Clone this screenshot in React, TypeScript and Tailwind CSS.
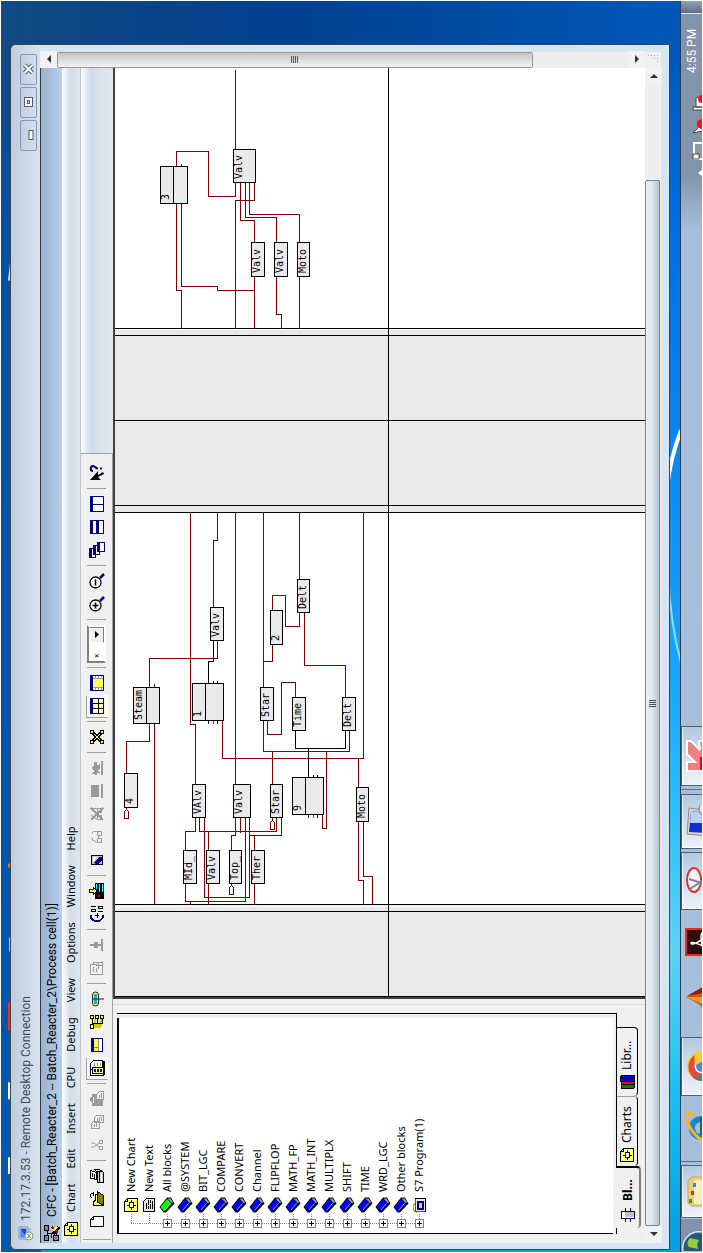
import type { ReactNode } from "react";

const NAVY = "#000080";
const GRAY = "#9a9a9a";
const WIRE = "#800000";

function Pix({ children, size = 16 }: { children: ReactNode; size?: number }) {
  return (
    <svg
      width={size}
      height={size}
      viewBox="0 0 16 16"
      fill="none"
      shapeRendering="crispEdges"
      className="shrink-0"
      aria-hidden="true"
    >
      {children}
    </svg>
  );
}

/* ---------- shared small icons ---------- */

const ChartIcon = () => (
  <Pix>
    <rect x="1" y="2" width="14" height="12" fill="#ffff66" />
    <path d="M1 3.500h14M1 5.500h14M1 7.500h14M1 9.500h14M1 11.500h14" stroke="#fff" strokeDasharray="1 1" />
    <path d="M1.500 1.500h10l3 3v10h-13z" stroke="#000" />
    <path d="M11.500 1.500v3h3" stroke="#000" fill="#fff" />
    <path d="M8 4v2M8 10v3M3 8.500h3M10 8.500h3" stroke={NAVY} />
    <rect x="5.500" y="6.500" width="5" height="4" stroke={NAVY} fill="#fff" />
  </Pix>
);

const TextIcon = () => (
  <Pix>
    <path d="M1.500 2.500h10l3 3v8h-13z" stroke="#000" fill="#e8e8e8" />
    <path d="M4 5.500h6M4 7.500h3M8 7.500h5M4 9.500h5M10 9.500h3M4 11.500h8" stroke="#000" />
  </Pix>
);

const BookIcon = ({ fill }: { fill: string }) => (
  <svg width="16" height="16" viewBox="0 0 16 16" className="shrink-0" aria-hidden="true">
    <path d="M6 0.500 15.500 8v4L9.500 15.500 0.500 7V4.500z" fill="#000" />
    <path d="M6 1.500 14 8 9 12.500 1.500 5z" fill={fill} />
    <path d="M3 6 9.500 11.500" stroke="#ccc" strokeWidth="0.800" />
    <path d="M10 12.500l4.500-4v3L10 14.500z" fill="#999" />
  </svg>
);

const ProgramIcon = () => (
  <Pix>
    <path d="M1 5 3 2h5l2 3H1z" fill="#ffff66" stroke={GRAY} />
    <rect x="1.500" y="4.500" width="13" height="10" fill="#e8e8e8" stroke="#555" />
    <path d="M14.500 4v11M1 14.500h14" stroke="#000" />
    <rect x="4.500" y="6.500" width="7" height="5" fill="#ccc" stroke={NAVY} strokeWidth="2" />
  </Pix>
);

const BlockIcon = () => (
  <Pix>
    <rect x="4.500" y="1.500" width="7" height="13" fill="#fff" stroke={NAVY} />
    <rect x="6" y="5" width="5" height="9" fill="#c0c0c0" />
    <path d="M1 5.500h3M1 10.500h3M12 5.500h3M12 10.500h3" stroke={NAVY} />
  </Pix>
);

const LibraryIcon = () => (
  <Pix>
    <path d="M1 2h4l1 13H2z" fill="#008000" stroke="#000" />
    <path d="M5 2h3l1 13H6z" fill="#ff0000" stroke="#000" />
    <path d="M8 1h5l2 3v11H9z" fill="#0000ff" stroke="#000" />
    <path d="M11.500 2v12" stroke="#000080" />
  </Pix>
);

const RemoteIcon = () => (
  <svg width="16" height="16" viewBox="0 0 16 16" className="shrink-0" aria-hidden="true">
    <rect x="2" y="1" width="12" height="9" rx="1" fill="#e9eef5" stroke="#7b8ca5" />
    <path d="M3.500 2.500h9v6h-9z" fill="#2448d8" />
    <path d="M3.500 2.500h9L4 8z" fill="#5f86ff" />
    <path d="M7 13h6v-2H8z" fill="#b8c4d4" />
    <circle cx="5" cy="11" r="4" fill="#eef4ee" stroke="#8aa08a" />
    <path d="M3 9.500 5 11 3 12.500M7 9.500 5.500 11 7 12.500" stroke="#1e9a2e" fill="none" />
  </svg>
);

const CfcIcon = () => (
  <Pix>
    <path d="M3 3h10M3 12h8M8 3v9M3 7h5" stroke="#000" />
    <rect x="0.500" y="0.500" width="5" height="4" fill="#888" stroke="#000" />
    <rect x="10.500" y="0.500" width="5" height="4" fill="#888" stroke="#000" />
    <rect x="0.500" y="9.500" width="5" height="5" fill="#888" stroke="#000" />
    <path d="M7 9 14 15M9 13l4-3" stroke="#000" strokeWidth="3" />
    <path d="M14 8 8 14" stroke="#c00000" strokeWidth="2" />
    <path d="M10 9 14 13" stroke="#ffff33" strokeWidth="2" />
  </Pix>
);

/* ---------- toolbar ---------- */

type Tool = { name: string; art: ReactNode; pressed?: boolean };

const zoomLens = (plus: boolean) => (
  <g shapeRendering="auto">
    <circle cx="6.500" cy="6.500" r="5.500" stroke="#000" strokeWidth="1.300" fill="#fff" />
    <path d="M3.500 6.500h6" stroke="#000" strokeWidth="1.600" />
    {plus && <path d="M6.500 3.500v6" stroke="#000" strokeWidth="1.600" />}
    <path d="m11 11 4 4" stroke={NAVY} strokeWidth="2.500" />
  </g>
);

const glasses = (
  <path
    d="M2.500 8.500h4v4h-4zM9.500 8.500h4v4h-4zM7 9.500h2M2.500 8l3-5h2M13.500 8V4l-2-1"
    stroke={GRAY}
    shapeRendering="auto"
  />
);

const groups: Tool[][] = [
  [
    { name: "New", art: <path d="M3.500 1.500h7l3 3v10h-10zM10.500 1.500v3h3" stroke="#000" fill="#fff" /> },
    {
      name: "Open",
      art: (
        <>
          <path d="M1.500 14V4.500h4l1 2h6V9" fill="#ffff66" stroke="#000" />
          <path d="M1.500 14.500 5 8.500h10.500l-4 6z" fill="#808000" stroke="#000" />
          <path d="M9 2.500h1M10 1.500h3M13.500 2v2M11 4.500h4" stroke="#000" />
        </>
      ),
    },
    {
      name: "Print",
      art: (
        <>
          <path d="M4.500 7.500 6 1.500h7.500l-2 6z" fill="#fff" stroke="#000" />
          <path d="M7 3.500h4M6 5.500h4" stroke="#000" />
          <path d="M1.500 8.500h10l3-3v5l-3 4h-10z" fill="#d0d0d0" stroke="#000" />
          <path d="M1 10.500h11M12.500 8v5" stroke="#000" />
          <path d="M3 12.500h7" stroke="#fff" />
        </>
      ),
    },
  ],
  [
    {
      name: "Cut",
      art: (
        <path
          d="M6 2v3l4 5M10 2v3L6 10M3.500 10.500h3v3h-3zM9.500 10.500h3v3h-3z"
          stroke={GRAY}
          shapeRendering="auto"
        />
      ),
    },
    {
      name: "Copy",
      art: (
        <path
          d="M1.500 2.500h5l2 2v6h-7zM7.500 5.500h5l2 2v7h-7zM3 5.500h3M3 7.500h4M9 8.500h3M9 10.500h4M9 12.500h4"
          stroke={GRAY}
          fill="#f0f0f0"
        />
      ),
    },
    {
      name: "Paste",
      art: (
        <>
          <path d="M1 3h3l2-2h3l2 2h2v11H1z" fill={GRAY} />
          <path d="M4 4.500h6" stroke="#fff" />
          <path d="M7.500 7.500h5l3 3v4h-8zM9 10.500h3M9 12.500h5" fill="#f0f0f0" stroke={GRAY} />
        </>
      ),
    },
  ],
  [
    {
      name: "Catalog",
      pressed: true,
      art: (
        <>
          <path d="M6.500 1.500h6l3 3v9h-9z" fill="#fff" stroke="#000" />
          <path d="M10 5.500h3M10 8.500h3M10 11.500h3" stroke="#999" />
          <path d="M0.500 1.500h6v13h-6z" fill="#fff" stroke="#000" />
          <path d="M2.500 3.500h6v11h-6z" fill="#ffff66" stroke="#000" />
          <path d="M4 5h3v2H4zM4 8h3v2H4zM4 11h3v2H4z" fill="#0000ff" />
          <path d="M1 15h14" stroke="#000" strokeWidth="2" />
        </>
      ),
    },
    {
      name: "Sheet view",
      art: (
        <>
          <path d="M1.500 2.500h13v11h-13z" fill="#fff" stroke={NAVY} />
          <path d="M1 2h14v3H1z" fill={NAVY} />
          <path d="M2 5h12v4H2z" fill="#ffff33" />
          <path d="M2 9h4v4H2z" fill="#fff" />
          <path d="M2 9.500h12M5.500 5v4" stroke="#888" />
        </>
      ),
    },
    {
      name: "Hierarchy",
      art: (
        <>
          <path d="M3 4v8M3 6h8M4 12h8M5 2v10" stroke="#cccc00" strokeWidth="2" />
          <path
            d="M1.500 1.500h4v3h-4zM11.500 1.500h3v3h-3zM11.500 6.500h3v3h-3zM11.500 11.500h3v3h-3z"
            fill="#ffff33"
            stroke="#000"
          />
          <path d="M6 3.500h5M6.500 4v9h5M7 8.500h4" stroke="#000" />
        </>
      ),
    },
    {
      name: "Run sequence",
      art: (
        <g shapeRendering="auto">
          <rect x="1" y="3.500" width="14" height="6" rx="3" fill="#ffff33" stroke="#222" />
          <rect x="3" y="5" width="10" height="3" fill="#20b0a8" />
          <path d="M8 3.500v11.500" stroke="#222" />
        </g>
      ),
    },
  ],
  [
    {
      name: "Watch",
      art: (
        <path
          d="M1.500 1.500h10v6M1.500 1.500v12h6M4 4.500h5M4 7.500h4M10.500 7v6M7 13.500h8M7.500 9.500h6v4M12 4.500h2v5"
          stroke={GRAY}
        />
      ),
    },
    { name: "Pin", art: <path d="M7 1h2v4h2v4H9v3h5v2H2v-2h5V9H5V5h2z" fill={GRAY} /> },
  ],
  [
    {
      name: "Compile",
      art: (
        <>
          <path d="M7 2H4L1.500 5v6L4 13.500h3" stroke={NAVY} strokeWidth="2" />
          <path d="M4 8h5M7 6v4" stroke="#000" />
          <path d="M10.500 2.500h2v4h-2zM15.500 2v5M10.500 9v5M13.500 9.500h2v4h-2z" stroke="#000" />
        </>
      ),
    },
    {
      name: "Download",
      art: (
        <>
          <path d="M0 6h16v9H0z" fill="#000" />
          <path d="M7 7.500h8M7 10.500h8M7 13.500h8" stroke="#00ffff" />
          <path d="M2 9h2v2H2z" fill="#ff0000" />
          <path d="M6.500 0.500h3v4h2l-3.500 4-3.500-4h2z" fill="#ffff33" stroke={NAVY} />
        </>
      ),
    },
  ],
  [
    {
      name: "Test mode",
      art: (
        <>
          <path d="M3.500 2.500h9v11h-9z" fill="#c8c8c8" stroke="#000" />
          <path d="M4 6 10 13" stroke={NAVY} strokeWidth="4" />
          <path d="M5 4h6v4z" fill="#fff" />
        </>
      ),
    },
    { name: "Watch on", art: glasses },
    {
      name: "Watch off",
      art: (
        <>
          {glasses}
          <path d="M2 2 14 14M14 2 2 14" stroke={GRAY} strokeWidth="1.500" />
        </>
      ),
    },
    { name: "Insert watch", art: <path d="M2 2h12v8H2zM1 12h14v2H1z" fill={GRAY} /> },
    {
      name: "Remove watch",
      art: <path d="M1 12h14v2H1zM2 3l3 2 3-3 3 3h3v3h-3l1 3H8L6 9l-3 2V8H1z" fill={GRAY} />,
    },
  ],
  [
    {
      name: "Network",
      art: (
        <>
          <path d="M3 3 13 13M13 3 3 13" stroke="#000" strokeWidth="3" />
          <path d="M3 3 13 13M13 3 3 13" stroke="#ffff33" />
          <path
            d="M1.500 1.500h3v3h-3zM11.500 1.500h3v3h-3zM1.500 11.500h3v3h-3zM11.500 11.500h3v3h-3z"
            fill="#ffff33"
            stroke="#000"
          />
        </>
      ),
    },
  ],
  [
    {
      name: "Overview",
      pressed: true,
      art: (
        <>
          <path d="M0.500 1.500h15v13h-15z" fill="#ffffb0" stroke={NAVY} />
          <path d="M0 1h16v3H0z" fill={NAVY} />
          <path d="M5.500 4v11M10.500 4v11M1 9.500h14" stroke="#000" />
        </>
      ),
    },
    {
      name: "Single sheet",
      art: (
        <>
          <path d="M0.500 1.500h15v13h-15z" fill="#fff" stroke={NAVY} />
          <path d="M0 1h16v3H0z" fill={NAVY} />
          <path d="M4 5h8v9H4z" fill="#ffff66" />
          <path d="M1 6.500h3M1 9.500h3M1 12.500h3M12 6.500h3M12 9.500h3M12 12.500h3M3.500 4v10M12.500 4v10" stroke={GRAY} />
        </>
      ),
    },
  ],
];

const viewGroups: Tool[][] = [
  [
    { name: "Zoom in", art: zoomLens(true) },
    { name: "Zoom out", art: zoomLens(false) },
  ],
  [
    {
      name: "Cascade",
      art: (
        <>
          <path d="M0.500 0.500h9v6h-9z" fill="#fff" stroke={NAVY} />
          <path d="M0 0h10v3H0z" fill={NAVY} />
          <path d="M3.500 4.500h9v6h-9z" fill="#fff" stroke={NAVY} />
          <path d="M3 4h10v3H3z" fill={NAVY} />
          <path d="M6.500 8.500h9v7h-9z" fill="#fff" stroke={NAVY} />
          <path d="M6 8h10v3H6z" fill={NAVY} />
        </>
      ),
    },
    {
      name: "Tile horizontally",
      art: (
        <>
          <path d="M1.500 1.500h13v6h-13zM1.500 8.500h13v6h-13z" fill="#fff" stroke={NAVY} />
          <path d="M1 1h14v3H1zM1 8h14v2H1z" fill={NAVY} />
        </>
      ),
    },
    {
      name: "Tile vertically",
      art: (
        <>
          <path d="M0.500 1.500h15v13h-15zM8 1v14" fill="#fff" stroke={NAVY} />
          <path d="M0 1h16v3H0z" fill={NAVY} />
        </>
      ),
    },
  ],
  [
    {
      name: "Context help",
      art: (
        <g shapeRendering="auto">
          <path d="M1 1v11l3-3 3 6 2-1-3-5h4z" fill="#000" />
          <path d="M10 4c0-3 5-3 5 0 0 2-2.500 2-2.500 5M12.500 11v2" stroke={NAVY} strokeWidth="2" />
        </g>
      ),
    },
  ],
];

const Separator = () => (
  <div className="flex w-2 shrink-0 justify-center">
    <div className="h-[19px] w-px bg-[#a0a0a0]" />
  </div>
);

function ToolGroup({ tools }: { tools: Tool[] }) {
  return (
    <div className="flex shrink-0">
      {tools.map((t) => (
        <button
          key={t.name}
          type="button"
          aria-label={t.name}
          className={
            t.pressed
              ? "flex h-[22px] w-[23px] items-center justify-center border border-white border-t-[#a0a0a0] border-l-[#a0a0a0] bg-[#f8f8f8]"
              : "flex h-[22px] w-[23px] items-center justify-center"
          }
        >
          <Pix>{t.art}</Pix>
        </button>
      ))}
    </div>
  );
}

function Toolbar() {
  return (
    <div className="flex h-8 bg-linear-to-b from-white via-[#d0dceb] via-30% to-[#e2e8f0]">
      <div className="flex items-center border-r border-b border-[#a0a0a0] bg-[#f0f0f0] pr-2 pl-[3px]">
        <div className="mr-[5px] h-7 w-px bg-[#a0a0a0]" />
        {groups.map((g, i) => (
          <div key={i} className="flex items-center">
            {i > 0 && <Separator />}
            <ToolGroup tools={g} />
          </div>
        ))}
        <Separator />
        <div className="relative mx-px flex h-[19px] w-[38px] shrink-0 border-2 border-[#808080] border-r-white border-b-white bg-white">
          <select
            aria-label="Zoom level"
            className="w-full appearance-none bg-transparent pr-4 pl-[3px] text-[8px] leading-[15px] text-black"
            defaultValue="x"
          >
            <option value="x">×</option>
          </select>
          <span className="pointer-events-none absolute inset-y-0 right-0 flex w-4 items-center justify-center border border-[#808080] border-t-white border-l-white bg-[#f0f0f0]">
            <svg width="7" height="4" viewBox="0 0 7 4" aria-hidden="true">
              <path d="M0 0h7L3.500 4z" fill="#000" />
            </svg>
          </span>
        </div>
        {viewGroups.map((g, i) => (
          <div key={i} className="flex items-center">
            <Separator />
            <ToolGroup tools={g} />
          </div>
        ))}
      </div>
    </div>
  );
}

/* ---------- block catalog ---------- */

const treeItems: { label: string; kind: "chart" | "text" | "all" | "book" | "program" }[] = [
  { label: "New Chart", kind: "chart" },
  { label: "New Text", kind: "text" },
  { label: "All blocks", kind: "all" },
  { label: "@SYSTEM", kind: "book" },
  { label: "BIT_LGC", kind: "book" },
  { label: "COMPARE", kind: "book" },
  { label: "CONVERT", kind: "book" },
  { label: "Channel", kind: "book" },
  { label: "FLIPFLOP", kind: "book" },
  { label: "MATH_FP", kind: "book" },
  { label: "MATH_INT", kind: "book" },
  { label: "MULTIPLX", kind: "book" },
  { label: "SHIFT", kind: "book" },
  { label: "TIME", kind: "book" },
  { label: "WRD_LGC", kind: "book" },
  { label: "Other blocks", kind: "book" },
  { label: "S7 Program(1)", kind: "program" },
];

function TreeIcon({ kind }: { kind: string }) {
  if (kind === "chart") return <ChartIcon />;
  if (kind === "text") return <TextIcon />;
  if (kind === "program") return <ProgramIcon />;
  return <BookIcon fill={kind === "all" ? "#00ff00" : "#0000ff"} />;
}

function TreeGuide({ first, last, expandable }: { first: boolean; last: boolean; expandable: boolean }) {
  return (
    <svg width="16" height="18" viewBox="0 0 16 18" shapeRendering="crispEdges" className="shrink-0" aria-hidden="true">
      <path
        d={`M5.500 ${first ? 9 : 0}V${last ? 9 : 18}M6 9.500h10`}
        stroke="#808080"
        strokeDasharray="1 1"
        fill="none"
      />
      {expandable && (
        <>
          <rect x="1.500" y="5.500" width="8" height="8" fill="#fff" stroke="#808080" />
          <path d="M3 9.500h5M5.500 7v5" stroke="#000" />
        </>
      )}
    </svg>
  );
}

function Catalog() {
  return (
    <aside className="flex w-[239px] shrink-0 flex-col border-r border-[#d2dfec] bg-[#f0f0f0] pt-1 pr-2 pb-1 pl-[9px]">
      <div className="flex min-h-0 flex-1 border-r border-b border-black pr-1 pb-[3px]">
        <ul className="min-w-0 flex-1 overflow-hidden border-t-2 border-l border-black bg-white pt-[3px] pl-1">
          {treeItems.map((item, i) => (
            <li key={item.label} className="flex h-[18px] items-center text-[11px] leading-[18px] whitespace-nowrap">
              <TreeGuide first={i === 0} last={i === treeItems.length - 1} expandable={i > 1} />
              <TreeIcon kind={item.kind} />
              <span className="ml-[5px]">{item.label}</span>
            </li>
          ))}
        </ul>
      </div>
      <div className="flex h-6 items-start pl-[6px] text-[12px]" role="tablist">
        <button
          type="button"
          role="tab"
          aria-selected="true"
          className="-mt-px flex h-[25px] w-[62px] items-center gap-[6px] rounded-b-sm border-r-2 border-b-2 border-[#808080] border-r-black bg-[#f0f0f0] pl-[5px] font-bold"
        >
          <BlockIcon />
          Bl...
        </button>
        <button
          type="button"
          role="tab"
          aria-selected="false"
          className="flex h-[21px] w-[70px] items-center gap-1 rounded-b-sm border-r border-b border-[#a0a0a0] border-b-black pl-[3px]"
        >
          <ChartIcon />
          Charts
        </button>
        <button
          type="button"
          role="tab"
          aria-selected="false"
          className="flex h-[21px] w-[69px] items-center gap-1 rounded-b-sm border-r border-b border-black pl-[6px]"
        >
          <LibraryIcon />
          Libr...
        </button>
      </div>
    </aside>
  );
}

/* ---------- chart canvas ---------- */

type Block = { label: string; x: number; y: number; w: number; h: number; split?: boolean };

const blocks: Block[] = [
  { label: "3", x: 160, y: 166, w: 27, h: 37, split: true },
  { label: "Valv", x: 233, y: 149, w: 22, h: 33 },
  { label: "Valv", x: 251, y: 242, w: 13, h: 34 },
  { label: "Valv", x: 274, y: 242, w: 13, h: 34 },
  { label: "Moto", x: 297, y: 242, w: 12, h: 34 },
  { label: "Steam", x: 133, y: 687, w: 26, h: 36, split: true },
  { label: "Valv", x: 210, y: 607, w: 13, h: 33 },
  { label: "1", x: 192, y: 683, w: 31, h: 37, split: true },
  { label: "4", x: 124, y: 773, w: 13, h: 34 },
  { label: "2", x: 270, y: 610, w: 12, h: 34 },
  { label: "Delt", x: 297, y: 579, w: 12, h: 33 },
  { label: "Star", x: 260, y: 687, w: 13, h: 33 },
  { label: "Time", x: 292, y: 697, w: 13, h: 33 },
  { label: "Delt", x: 342, y: 697, w: 13, h: 33 },
  { label: "9", x: 292, y: 777, w: 31, h: 37, split: true },
  { label: "VAlv", x: 192, y: 784, w: 13, h: 33 },
  { label: "Valv", x: 233, y: 784, w: 17, h: 33 },
  { label: "Star", x: 270, y: 784, w: 12, h: 33 },
  { label: "Moto", x: 356, y: 787, w: 12, h: 34 },
  { label: "MId_", x: 183, y: 850, w: 13, h: 33 },
  { label: "Valv", x: 206, y: 850, w: 13, h: 33 },
  { label: "Top_", x: 229, y: 850, w: 12, h: 33 },
  { label: "Ther", x: 251, y: 850, w: 13, h: 33 },
];

const redWires = [
  "M235 69V149M176 166V151H208V196H235V182M181 163V166",
  "M176 203V290H181V328M181 203V286H217V290H254",
  "M254 182V200H235V328M240 182V220H254V242M245 182V217H276V242M249 182V214H299V242",
  "M254 276V328M276 276V314H281V328M299 276V328",
  "M190 512V724H195V784M217 512V540H213V607M217 640V658H149V686M154 683V686",
  "M149 723V741H126V773M154 723V904M222 720V758H363V512M235 512V784",
  "M263 512V687M272 644V661H263M272 610V595H285V626H299V612M299 512V579",
  "M304 612V665H345V697M267 720V734H281V682H295V697",
  "M263 720V751H349V730M272 751V784M326 751V828H322V814",
  "M358 758V787M358 821V880H363V904M363 821V876H372V904",
  "M195 817V831H185V850M185 883V901H245V817M190 901V904",
  "M199 817V831H276V817M208 831V850M208 883V904M204 817V897H249V817",
  "M235 817V835H231V850M240 817V832M281 817V835H248M254 835V850M254 883V904",
  "M124 818V811L126 809L128 811V818ZM126 807V809",
  "M229 894V887L231 885L233 887V894ZM231 883V885",
  "M270 829V822L272 820L274 822V829ZM272 817V820",
].join("");

const blackWires = [
  "M213 640V661H208V683M213 680V683M217 680V683M217 720V723",
  "M295 730V748H345V730M308 748V777M313 774V777M317 774V777M317 814V817",
].join("");

function ChartCanvas() {
  return (
    <div className="ml-[5px] min-w-0 flex-1 overflow-hidden border-t-2 border-l-2 border-[#404040] bg-white">
      <svg width="929" height="530" viewBox="0 0 929 530" role="img" aria-label="CFC chart overview">
        {/* Chart data is stored in portrait sheet coordinates: x runs down, y runs right to left. */}
        <g transform="translate(997 -115) rotate(90)" shapeRendering="crispEdges" fill="none">
          <rect x="115" y="329" width="535" height="183" fill="#eaeaea" />
          <rect x="115" y="905" width="535" height="93" fill="#eaeaea" />
          <path d="M115 329.500H650M115 906.500H650" stroke="#fff" />
          <path
            d="M115 328.500H650M115 335.500H650M115 420.500H650M115 505.500H650M115 512.500H650M115 904.500H650M115 911.500H650M388.500 60V997M115 996.500H650"
            stroke="#000"
          />
          <g transform="translate(0.5 0.5)">
            <path d={redWires} stroke={WIRE} />
            <path d={blackWires} stroke="#000" />
            <path d="M208 720V723M308 814V817" stroke="#0000a0" />
            <path d="M213 720V723M313 814V817" stroke="#008080" />
            {blocks.map((b) => (
              <g key={`${b.x}-${b.y}`}>
                <rect x={b.x} y={b.y} width={b.w} height={b.h} fill="#eaeaea" stroke="#000" />
                {b.split && <path d={`M${b.x + 13} ${b.y}v${b.h}`} stroke="#000" />}
              </g>
            ))}
          </g>
        </g>
        <g fontFamily="'DejaVu Sans Mono', monospace" fontSize="10" fill="#000">
          {blocks.map((b) => (
            <text key={`${b.x}-${b.y}`} x={997 - b.y - b.h + 3} y={b.x - 115 + 9}>
              {b.label}
            </text>
          ))}
        </g>
      </svg>
    </div>
  );
}

/* ---------- scroll bars ---------- */

function Arrow({ d, label }: { d: string; label: string }) {
  return (
    <button type="button" aria-label={label} className="flex size-[17px] shrink-0 items-center justify-center bg-[#f2f2f2]">
      <svg width="8" height="8" viewBox="0 0 8 8" aria-hidden="true">
        <path d={d} fill="#333" />
      </svg>
    </button>
  );
}

function VerticalScroll() {
  return (
    <div className="flex w-4 shrink-0 flex-col bg-[#eeeeee]">
      <Arrow label="Scroll up" d="M0 6h8L4 2z" />
      <div className="flex-1">
        <div className="flex h-5/6 flex-col items-center justify-center gap-px rounded-xs border border-[#979797] bg-linear-to-r from-[#f3f3f3] via-[#dcdcdc] to-[#c4c4c8]">
          {[0, 1, 2, 3].map((n) => (
            <div key={n} className="h-px w-[7px] bg-[#555555]" />
          ))}
        </div>
      </div>
      <Arrow label="Scroll down" d="M0 2h8L4 6z" />
    </div>
  );
}

function HorizontalScroll() {
  return (
    <div className="flex h-4 shrink-0 bg-[#eeeeee]">
      <Arrow label="Scroll left" d="M6 0v8L2 4z" />
      <div className="flex-1">
        <div className="flex h-[15px] w-11/12 items-center justify-center gap-px rounded-xs border border-[#6f8494] bg-linear-to-b from-[#eaf2f4] via-[#dfe8ec] via-45% to-[#b4c3cf]">
          {[0, 1, 2, 3].map((n) => (
            <div key={n} className="h-[7px] w-px bg-[#3d5060]" />
          ))}
        </div>
      </div>
      <Arrow label="Scroll right" d="M2 0v8l4-4z" />
    </div>
  );
}

/* ---------- windows ---------- */

const menus = ["Chart", "Edit", "Insert", "CPU", "Debug", "View", "Options", "Window", "Help"];

function CaptionButton({ label, children }: { label: string; children: ReactNode }) {
  return (
    <button
      type="button"
      aria-label={label}
      className="flex h-[17px] w-[31px] items-center justify-center rounded-xs border border-[#8898b8] bg-linear-to-b from-[#c2d0e2] to-[#d2dfec]"
    >
      <svg width="12" height="11" viewBox="0 0 12 11" fill="none" aria-hidden="true">
        {children}
      </svg>
    </button>
  );
}

function CfcWindow() {
  return (
    <div className="flex min-w-0 flex-1 flex-col">
      <div className="flex h-[22px] shrink-0 items-center gap-2 border-t border-[#333a40] bg-linear-to-b from-[#9bb1ce] to-[#b7d0ec] pl-[2px] font-['Roboto','Noto_Sans',sans-serif] text-[12px] text-black">
        <CfcIcon />
        CFC - [Batch_Reacter_2 -- Batch_Reacter_2\Process cell(1)]
      </div>
      <nav className="flex h-[19px] shrink-0 items-center gap-[15px] border-b border-[#bcc4cc] bg-linear-to-b from-white via-[#d2deec] via-45% to-[#dfe6ee] pl-[6px] text-[11px]">
        <div className="-mr-[6px] flex">
          <ChartIcon />
        </div>
        {menus.map((m) => (
          <button key={m} type="button">
            {m}
          </button>
        ))}
      </nav>
      <Toolbar />
      <div className="flex min-h-0 flex-1 bg-[#f0f0f0]">
        <Catalog />
        <ChartCanvas />
      </div>
      <HorizontalScroll />
    </div>
  );
}

function RemoteDesktopWindow() {
  return (
    <section className="mt-[9px] mr-[43px] ml-[2px] flex min-h-0 flex-1 flex-col rounded-t-md border border-[#3c4650] bg-[#d7e4f2] pr-[7px] pb-2 pl-[6px]">
      <header className="-mr-[7px] -ml-[6px] flex h-[29px] shrink-0 items-center rounded-t-md bg-linear-to-b from-[#bfcddc] to-[#d6e4f2] pr-[9px] pl-2">
        <RemoteIcon />
        <h1 className="ml-1 flex-1 font-['Roboto','Noto_Sans',sans-serif] text-[12px] text-[#3c4a5c]">
          172.17.3.53 - Remote Desktop Connection
        </h1>
        <div className="mt-[6px] flex gap-[2px]">
          <CaptionButton label="Minimize">
            <rect x="1.500" y="6" width="9" height="4" fill="#fff" stroke="#555b70" />
          </CaptionButton>
          <CaptionButton label="Maximize">
            <rect x="1.500" y="1.500" width="9" height="8" fill="#fff" stroke="#555b70" />
            <rect x="4.500" y="4.500" width="3" height="2" fill="#d0dcea" stroke="#555b70" />
          </CaptionButton>
          <CaptionButton label="Close">
            <path d="m2 1.500 8 8m0-8-8 8" stroke="#555b70" strokeWidth="4" />
            <path d="m2 1.500 8 8m0-8-8 8" stroke="#fff" strokeWidth="2" />
          </CaptionButton>
        </div>
      </header>
      <div className="flex min-h-0 flex-1">
        <CfcWindow />
        <div className="flex flex-col bg-[#f0f0f0]">
          <div className="flex min-h-0 flex-1">
            <VerticalScroll />
          </div>
          <svg width="16" height="16" viewBox="0 0 16 16" fill="#a8a8a8" aria-hidden="true">
            <path d="M12 6h1v1h-1zM12 9h1v1h-1zM9 9h1v1H9zM12 12h1v1h-1zM9 12h1v1H9zM6 12h1v1H6zM12 3h1v1h-1z" />
          </svg>
        </div>
      </div>
    </section>
  );
}

/* ---------- task bar ---------- */

function Art({ children }: { children: ReactNode }) {
  return (
    <svg width="32" height="32" viewBox="0 0 32 32" fill="none" className="mt-1 shrink-0" aria-hidden="true">
      {children}
    </svg>
  );
}

const raised =
  "flex shrink-0 items-start justify-center overflow-hidden border border-b-0 border-[#4f6076] bg-linear-to-r from-[#eef2f8] to-[#b4c8e2] shadow-[inset_1px_1px_0_#ffffffaa]";
const flat = "flex shrink-0 items-start justify-center overflow-hidden";

function Taskbar() {
  return (
    <footer className="mt-[10px] flex h-[22px] shrink-0 overflow-hidden border-t border-[#2c3c50] bg-[#a7bfdc] pl-px">
      <button type="button" aria-label="Start" className={`${flat} w-8 bg-[#8093ab]`}>
        <svg width="34" height="34" viewBox="0 0 34 34" className="shrink-0" aria-hidden="true">
          <circle cx="4" cy="18" r="17" fill="#d8e4f0" />
          <circle cx="4" cy="18" r="15.500" fill="#26587a" />
          <path d="M5 8c4-3 6-1 9 1l-2 9c-3-2-6-2-9-1z" fill="#8fd03c" />
        </svg>
      </button>
      <button type="button" aria-label="Explorer" className={`${raised} ml-px w-[53px]`}>
        <Art>
          <path d="M1 6l3-4h22l4 4v26H1z" fill="#e9cf7c" stroke="#c9a94e" />
          <path d="M3 8h24v24H3z" fill="#f9eebc" />
          <path d="M4 3h4v3H4z" fill="#1fa82c" />
          <path d="M12 5h4v3h-4z" fill="#e03020" />
          <path d="M20 7h4v3h-4z" fill="#1f90f0" />
        </Art>
      </button>
      <div className="ml-[3px] w-px bg-[#5c6f88]" />
      <button type="button" aria-label="Internet Explorer" className={`${flat} w-[65px]`}>
        <Art>
          <circle cx="16" cy="16" r="12" fill="#2484c8" />
          <circle cx="16" cy="16" r="6" fill="#a7bfdc" />
          <path d="M9 15h18v4H9z" fill="#1c5f98" />
          <path d="M3 24C0 14 20 0 29 2c3 1 1 6-1 8" stroke="#f4b820" strokeWidth="3" />
        </Art>
      </button>
      <button type="button" aria-label="Chrome" className={`${raised} w-[59px]`}>
        <Art>
          <circle cx="16" cy="16" r="15" fill="#fcc934" />
          <path d="M16 16 3 8.500A15 15 0 0 0 3 23.500l5 7 8-14.500z" fill="#2a9d50" />
          <path d="M16 16H30A15 15 0 0 0 3 8.500L9 19z" fill="#dd4b3e" />
          <circle cx="16" cy="16" r="7.500" fill="#fff" />
          <circle cx="16" cy="16" r="6" fill="#4285f4" />
          <path d="M16 8.500h13l2 7.500-7 6z" fill="#fcc934" />
        </Art>
      </button>
      <button type="button" aria-label="MATLAB" className={`${flat} w-[75px]`}>
        <Art>
          <path d="M0 22 10 15 18 1l13 22-9-4-8 10-6-7z" fill="#d8541c" />
          <path d="M18 1c-4 10-7 18-10 20l6 8 4-10z" fill="#f59a2e" />
          <path d="M0 22 10 15l4 4-6 4z" fill="#3c78b8" />
          <path d="M19 2l3 17 9 4z" fill="#8c1f14" />
        </Art>
      </button>
      <button type="button" aria-label="Acrobat" className={`${flat} mr-3 w-10`}>
        <Art>
          <rect x="3" y="1" width="26" height="30" fill="#2b0e0e" stroke="#f02a10" strokeWidth="2" />
          <path d="M15 6c-3 0 1 9 5 12s7 1 5-1-14-1-18 3 0 5 3 1 7-15 5-15z" stroke="#fff" strokeWidth="1.500" />
        </Art>
      </button>
      <button type="button" aria-label="Snipping Tool" className={`${raised} w-[58px]`}>
        <Art>
          <ellipse cx="17" cy="8" rx="12" ry="7" fill="#f4f6fa" stroke="#e03030" strokeWidth="2" />
          <path d="M8 4 20 22M18 3 12 22" stroke="#7c8896" strokeWidth="2" />
          <path d="M18 15l8 3-6 6z" fill="#2a6da8" />
        </Art>
      </button>
      <button type="button" aria-label="Remote Desktop" className={`${raised} ml-[3px] w-[55px]`}>
        <Art>
          <path d="M3 1 29 3l-3 22L1 22z" fill="#d8d8d0" stroke="#8c8c84" />
          <path d="M5 3l21 2-2 17L4 20z" fill="#0f2fd0" />
          <path d="M14 4l12 1-2 13-10 0z" fill="#b8d0fa" />
          <circle cx="28" cy="20" r="7" fill="#e4e4dc" stroke="#777" />
        </Art>
      </button>
      <div className="ml-1 w-px bg-[#5c6f88]" />
      <button type="button" aria-label="Antivirus" className={`${raised} ml-[3px] w-[60px]`}>
        <Art>
          <path d="M1 1h9v8l8-8h13v4l-9 9 9-1v19H1z" fill="#ee8080" stroke="#fff" strokeWidth="2" />
          <path d="M2 14h13v14H2z" fill="#f00000" />
          <path d="M17 16l4-2 6 6H17z" fill="#8a8a8a" />
        </Art>
      </button>
      <div className="flex-1" />
      <div className="flex w-[230px] shrink-0 items-start bg-linear-to-r from-[#a7bfdc] to-[#8294ab] to-25%">
        <svg width="100" height="22" viewBox="0 0 100 22" className="ml-[46px] shrink-0" aria-hidden="true">
          <path d="m12 17 4 5H8z" fill="#fff" />
          <path d="M26 13h16v9H26z" fill="#8a9ab0" stroke="#fff" strokeWidth="2" />
          <path d="M26 12h5v6h-5z" fill="#fff" stroke="#444" />
          <path d="M52 12l5 5h7v5H54z" fill="#fff" stroke="#444" />
          <circle cx="61" cy="21" r="5" fill="#f01818" />
          <path d="M75 12h3v10h-3zM78 15h9l3 7H78z" fill="#fff" stroke="#444" />
          <circle cx="86" cy="21" r="4" fill="#f01818" />
        </svg>
        <time className="mt-[3px] ml-3 font-['Roboto','Noto_Sans',sans-serif] text-[12px] leading-4 text-white">
          4:55 PM
        </time>
        <div className="flex-1" />
        <button
          type="button"
          aria-label="Show desktop"
          className="h-full w-[13px] border-l border-[#dfe7f0] bg-linear-to-r from-[#5d6f84] to-[#93a3b6]"
        />
      </div>
    </footer>
  );
}

function Wallpaper() {
  return (
    <svg className="absolute inset-0 size-full" viewBox="0 0 1253 703" preserveAspectRatio="none" aria-hidden="true">
      <defs>
        <linearGradient id="base" x1="0" y1="0" x2="1" y2="0">
          <stop offset="0" stopColor="#0a9ae0" />
          <stop offset="0.100" stopColor="#12b8f0" />
          <stop offset="0.240" stopColor="#5fd2f4" />
          <stop offset="0.330" stopColor="#36c3fa" />
          <stop offset="0.450" stopColor="#1ba6fa" />
          <stop offset="0.650" stopColor="#0b86ee" />
          <stop offset="0.820" stopColor="#006ee0" />
          <stop offset="1" stopColor="#0052b0" />
        </linearGradient>
        <linearGradient id="top" x1="0" y1="0" x2="1" y2="0">
          <stop offset="0" stopColor="#0458b0" />
          <stop offset="0.800" stopColor="#0450a4" />
          <stop offset="1" stopColor="#124a82" />
        </linearGradient>
        <linearGradient id="side" x1="0" y1="0" x2="0" y2="1">
          <stop offset="0" stopColor="#124a82" />
          <stop offset="0.400" stopColor="#00408e" />
          <stop offset="1" stopColor="#0058b8" />
        </linearGradient>
      </defs>
      <rect width="1253" height="703" fill="url(#base)" />
      <rect width="1253" height="40" fill="url(#top)" />
      <rect x="1205" width="48" height="690" fill="url(#side)" />
      <path d="M765 668Q795 671 823 682" stroke="#fff" strokeWidth="4" fill="none" />
      <path d="M590 682Q630 671 680 669" stroke="#8fdcff" strokeWidth="2" fill="none" />
      <path d="M222 7h28v4h-28z" fill="#ff2a10" />
      <path d="M78 7h17v4H78zM153 7h17v4h-17z" fill="#fff" />
      <path d="M301 8h14v3h-14z" fill="#f0c838" />
      <path d="M385 7h4v4h-4z" fill="#e07820" />
      <path d="M973 7l18 2v2h-18z" fill="#f0e0a0" />
    </svg>
  );
}

export default function App() {
  return (
    <main className="relative h-screen w-screen overflow-hidden bg-white">
      {/* The whole desktop is shown on a display turned a quarter turn counter-clockwise. */}
      <div className="absolute top-full left-0 h-[100vw] w-[100vh] origin-top-left -rotate-90 border border-white font-['Noto_Sans','DejaVu_Sans',sans-serif]">
        <Wallpaper />
        <div className="relative -m-px flex h-[100vw] flex-col overflow-hidden border border-white">
          <RemoteDesktopWindow />
          <Taskbar />
        </div>
      </div>
    </main>
  );
}
